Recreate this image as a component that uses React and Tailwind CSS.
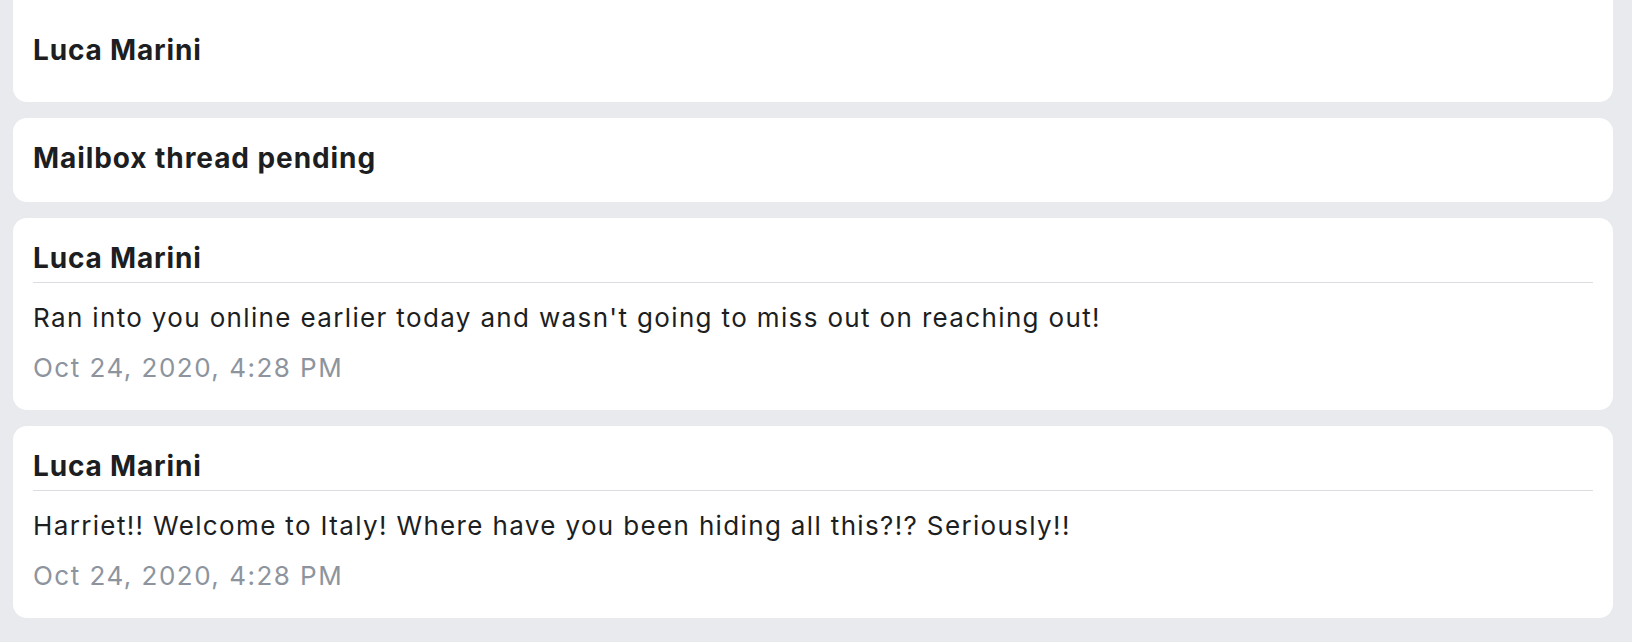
const messages = [
  {
    id: 1,
    author: 'Luca Marini',
    body: "Ran into you online earlier today and wasn't going to miss out on reaching out!",
    sentAt: 'Oct 24, 2020, 4:28 PM',
  },
  {
    id: 2,
    author: 'Luca Marini',
    body: 'Harriet!! Welcome to Italy! Where have you been hiding all this?!? Seriously!!',
    sentAt: 'Oct 24, 2020, 4:28 PM',
  },
];

function MessageCard({ message }) {
  return (
    <div className="rounded-[14px] bg-white px-5 pt-5 pb-[23px]">
      <div className="border-b border-[#dadde1] pb-1 text-[28px] leading-[40px] font-bold tracking-[0.03em] text-[#1c1e21]">
        {message.author}
      </div>
      <p className="mt-[15px] text-[26px] leading-[39px] tracking-[0.052em] text-[#1c1e21]">{message.body}</p>
      <p className="mt-[11px] text-[26px] leading-[39px] tracking-[0.057em] text-[#8d949e]">{message.sentAt}</p>
    </div>
  );
}

export default function App() {
  return (
    <div
      className="min-h-screen bg-[#e9eaee] pl-[13px] pr-[19px] pb-[25px]"
      style={{ fontFamily: 'Inter, "Noto Sans", sans-serif' }}
    >
      <div className="flex flex-col gap-4">
        <div className="rounded-b-[14px] bg-white px-5 pt-[30px] pb-[32px]">
          <div className="text-[28px] leading-[40px] font-bold tracking-[0.03em] text-[#1c1e21]">Luca Marini</div>
        </div>

        <div className="rounded-[14px] bg-white px-5 pt-5 pb-6">
          <div className="text-[28px] leading-[40px] font-bold tracking-[0.033em] text-[#1c1e21]">
            Mailbox thread pending
          </div>
        </div>

        {messages.map((message) => (
          <MessageCard key={message.id} message={message} />
        ))}
      </div>
    </div>
  );
}
